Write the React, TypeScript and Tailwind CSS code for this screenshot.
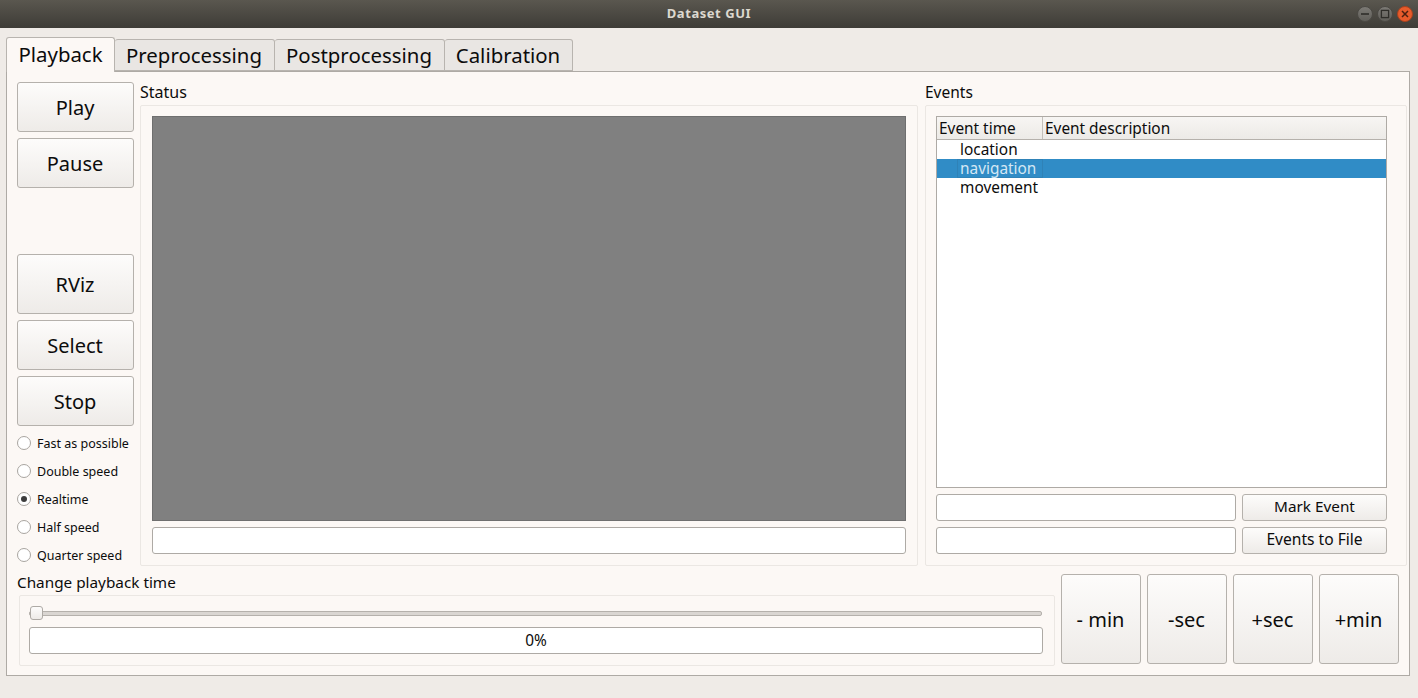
const FONT = "font-['Noto_Sans',sans-serif]";

const BTN =
  'flex items-center justify-center rounded-[3px] border border-[#b5b1ac] bg-gradient-to-b from-[#fdfcfb] to-[#eeebe8] text-[#0c0c0c]';

const TABS = [
  { label: 'Playback', width: 'w-[109px]', active: true },
  { label: 'Preprocessing', width: 'w-[160px]', active: false },
  { label: 'Postprocessing', width: 'w-[170px]', active: false },
  { label: 'Calibration', width: 'w-[128px]', active: false },
];

const SPEEDS = ['Fast as possible', 'Double speed', 'Realtime', 'Half speed', 'Quarter speed'];

const SEEK = ['- min', '-sec', '+sec', '+min'];

const PushButton = ({ label, className }: { label: string; className: string }) => (
  <button className={`${BTN} ${className}`}>{label}</button>
);

const TextBox = ({ className }: { className: string }) => (
  <div className={`h-[27px] rounded-[3px] border border-[#aeaaa5] bg-white ${className}`} />
);

const TitleBar = () => (
  <div className="relative flex h-[28px] items-center justify-center bg-gradient-to-b from-[#5a574f] to-[#3e3c37]">
    <span className="text-[13px] font-bold tracking-[0.55px] text-[#dcd8cf]">Dataset GUI</span>
    <div className="absolute right-[5px] top-[6px] flex gap-[4px]">
      <svg width="16" height="16" viewBox="0 0 16 16">
        <defs>
          <linearGradient id="wm" x1="0" y1="0" x2="0" y2="1">
            <stop offset="0" stopColor="#7d7b76" />
            <stop offset="1" stopColor="#5f5d58" />
          </linearGradient>
        </defs>
        <circle cx="8" cy="8" r="7.5" fill="url(#wm)" stroke="#4a4843" />
        <path d="M4 8h8" stroke="#2f2e2a" strokeWidth="1.6" />
      </svg>
      <svg width="16" height="16" viewBox="0 0 16 16">
        <circle cx="8" cy="8" r="7.5" fill="url(#wm)" stroke="#4a4843" />
        <rect x="4.4" y="4.4" width="7.2" height="7.2" fill="none" stroke="#2f2e2a" strokeWidth="1.3" />
      </svg>
      <svg width="16" height="16" viewBox="0 0 16 16">
        <circle cx="8" cy="8" r="7.5" fill="#e75b2b" stroke="#a8421f" />
        <path d="M5 5l6 6M11 5l-6 6" stroke="#4a2010" strokeWidth="1.5" />
      </svg>
    </div>
  </div>
);

const TabBar = () => (
  <div className="flex h-[34px] items-end pl-[6px]">
    {TABS.map((tab) => (
      <div
        key={tab.label}
        className={`relative flex items-center justify-center rounded-t-[3px] border border-[#b8b4af] text-[20.4px] text-[#0c0c0c] ${tab.width} ${
          tab.active
            ? 'z-10 -mb-px h-[35px] border-b-0 bg-[#fcf8f5] pb-[1px]'
            : 'h-[32px] border-l-0 bg-[#e9e6e3] pr-[1px]'
        }`}
      >
        {tab.label}
      </div>
    ))}
  </div>
);

const LeftColumn = () => (
  <div className="flex w-[117px] shrink-0 flex-col">
    <PushButton label="Play" className="h-[50px] pr-[1px] pt-[2px] text-[20px]" />
    <PushButton label="Pause" className="mt-[6px] h-[50px] pr-[1px] pt-[2px] text-[20px]" />
    <PushButton label="RViz" className="mt-[66px] h-[60px] pr-[1px] pt-[2px] text-[20px]" />
    <PushButton label="Select" className="mt-[6px] h-[50px] pr-[1px] pt-[2px] text-[20px]" />
    <PushButton label="Stop" className="mt-[6px] h-[50px] pr-[1px] pt-[2px] text-[20px]" />
    <div className="mt-[3px] flex flex-col">
      {SPEEDS.map((speed) => (
        <div key={speed} className="flex h-[28px] items-center gap-[6px]">
          <span className="flex h-[14px] w-[14px] items-center justify-center rounded-full border border-[#a9a5a0] bg-white">
            {speed === 'Realtime' && <span className="h-[6px] w-[6px] rounded-full bg-[#3c3c3c]" />}
          </span>
          <span className="whitespace-nowrap pt-[3px] text-[12.5px] text-[#0c0c0c]">{speed}</span>
        </div>
      ))}
    </div>
  </div>
);

const StatusPanel = () => (
  <div className="ml-[6px] flex w-[778px] shrink-0 flex-col">
    <div className="flex h-[23px] items-start text-[16px] leading-[20px] text-[#0c0c0c]">Status</div>
    <div className="flex h-[461px] flex-col rounded-[2px] border border-[#ebe7e3] px-[11px] pt-[10px]">
      <div className="h-[405px] border border-[#6f6f6f] bg-[#808080]" />
      <TextBox className="mt-[6px]" />
    </div>
  </div>
);

const EventsTree = () => (
  <div className="h-[372px] border border-[#aeaaa5] bg-white text-[15.4px] text-[#0c0c0c]">
    <div className="flex h-[23px] items-center border-b border-[#b5b1ac] bg-gradient-to-b from-[#f7f5f3] to-[#eceae7]">
      <div className="flex h-[22px] w-[106px] items-center border-r border-[#c4c0bb] pl-[2px] pt-[1px]">Event time</div>
      <div className="flex h-[22px] items-center pl-[2px] pt-[1px]">Event description</div>
    </div>
    <div className="flex h-[19px] items-center pl-[23px]">location</div>
    <div className="flex h-[19px] items-center bg-[#308cc6] text-[#d4e7f4]">
      <div className="ml-[20px] flex h-[19px] w-[86px] items-center border border-[#2f82b7] pl-[2px]">navigation</div>
    </div>
    <div className="flex h-[19px] items-center pl-[23px]">movement</div>
  </div>
);

const EventsPanel = () => (
  <div className="ml-[7px] flex w-[482px] shrink-0 flex-col">
    <div className="flex h-[23px] items-start text-[15.5px] leading-[20px] text-[#0c0c0c]">Events</div>
    <div className="flex h-[461px] flex-col rounded-[2px] border border-[#ebe7e3] pl-[10px] pr-[19px] pt-[10px]">
      <EventsTree />
      <div className="mt-[6px] flex gap-[6px]">
        <TextBox className="w-[300px]" />
        <PushButton label="Mark Event" className="h-[27px] w-[145px] pb-[2px] text-[15.3px]" />
      </div>
      <div className="mt-[6px] flex gap-[6px]">
        <TextBox className="w-[300px]" />
        <PushButton label="Events to File" className="h-[27px] w-[145px] pb-[1px] text-[15.6px]" />
      </div>
    </div>
  </div>
);

const PlaybackTime = () => (
  <div className="flex w-[1038px] shrink-0 flex-col">
    <div className="h-[21px] text-[15.3px] leading-[17px] text-[#0c0c0c]">Change playback time</div>
    <div className="ml-[2px] h-[71px] rounded-[2px] border border-[#ebe7e3] pl-[9px] pr-[11px] pt-[10px]">
      <div className="relative flex h-[21px] items-center pb-[7px]">
        <div className="mr-[1px] h-[5px] w-full rounded-[2px] border border-[#b5b1ac] bg-[#dad6d2]" />
        <div className="absolute left-[1px] top-0 h-[14px] w-[13px] rounded-[3px] border border-[#aeaaa5] bg-gradient-to-b from-[#fdfcfb] to-[#eeebe8]" />
      </div>
      <div className="flex h-[27px] items-center justify-center rounded-[3px] border border-[#aeaaa5] bg-white text-[15.4px] text-[#0c0c0c]">
        0%
      </div>
    </div>
  </div>
);

export default function App() {
  return (
    <div className={`h-[698px] w-[1418px] overflow-hidden bg-[#efebe7] ${FONT}`}>
      <TitleBar />
      <div className="h-[9px]" />
      <TabBar />
      <div className="ml-[6px] h-[605px] w-[1404px] border border-[#aeaaa5] bg-[#fcf8f5] pl-[10px] pt-[10px]">
        <div className="flex">
          <LeftColumn />
          <StatusPanel />
          <EventsPanel />
        </div>
        <div className="mt-[5px] flex">
          <PlaybackTime />
          <div className="ml-[6px] flex gap-[6px]">
            {SEEK.map((label) => (
              <PushButton key={label} label={label} className="h-[90px] w-[80px] pr-[1px] pt-[2px] text-[20px]" />
            ))}
          </div>
        </div>
      </div>
    </div>
  );
}
